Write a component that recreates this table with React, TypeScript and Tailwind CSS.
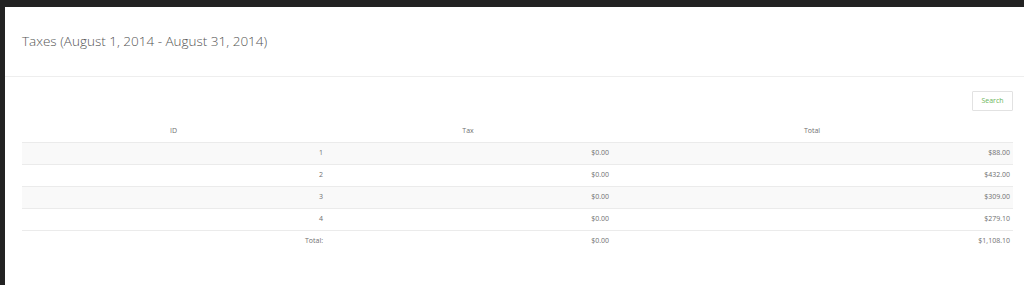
import React from "react";

const rows = [
  { id: "1", tax: "$0.00", total: "$88.00" },
  { id: "2", tax: "$0.00", total: "$432.00" },
  { id: "3", tax: "$0.00", total: "$309.00" },
  { id: "4", tax: "$0.00", total: "$279.10" },
];

export default function App() {
  return (
    <div className="w-[1024px] h-[285px] bg-[#222222] pt-[7px] pl-[5px] overflow-hidden" style={{ fontFamily: '"Open Sans", "Noto Sans", sans-serif' }}>
      <div className="bg-white h-full w-full">
        <div className="h-[70px] border-b border-[#eeeeee] flex items-center pl-[17px]">
          <h1 className="text-[13.5px] font-light text-[#555555]">Taxes (August 1, 2014 - August 31, 2014)</h1>
        </div>
        <div className="pl-[17px] pr-[11px] pt-[14px]">
          <div className="flex justify-end">
            <button className="h-[20px] w-[41px] border border-[#e2e2e2] bg-white text-[7px] text-[#6bb55a] rounded-[1px]">Search</button>
          </div>
          <table className="w-full mt-[10px] text-[7px] text-[#707070] border-collapse">
            <thead>
              <tr className="h-[21px]">
                <th className="font-normal text-center w-[303px]">ID</th>
                <th className="font-normal text-center w-[286px]">Tax</th>
                <th className="font-normal text-center">Total</th>
              </tr>
            </thead>
            <tbody>
              {rows.map((r, i) => (
                <tr key={r.id} className={`h-[22px] border-t border-[#ebebeb] ${i % 2 === 0 ? "bg-[#f9f9f9]" : "bg-white"}`}>
                  <td className="text-right pr-[2px]">{r.id}</td>
                  <td className="text-right pr-[2px]">{r.tax}</td>
                  <td className="text-right pr-[3px]">{r.total}</td>
                </tr>
              ))}
              <tr className="h-[21px] border-t border-[#ebebeb]">
                <td className="text-right pr-[2px]">Total:</td>
                <td className="text-right pr-[2px]">$0.00</td>
                <td className="text-right pr-[3px]">$1,108.10</td>
              </tr>
            </tbody>
          </table>
        </div>
      </div>
    </div>
  );
}
